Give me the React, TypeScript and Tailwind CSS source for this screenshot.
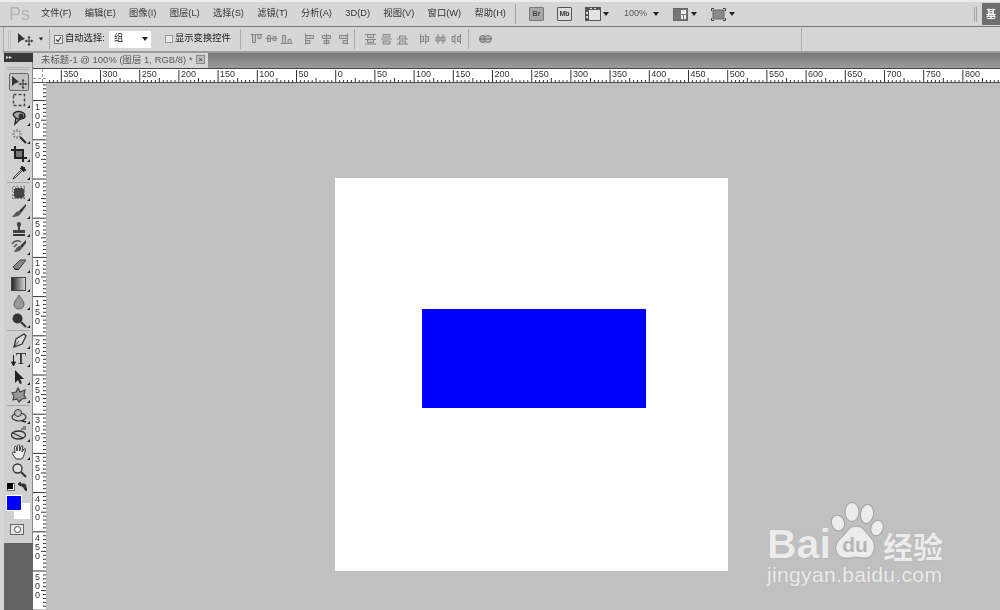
import React from "react";

const D = 39.2;
const range = (a: number, b: number) => Array.from({ length: b - a + 1 }, (_, i) => a + i);

function HRuler() {
  const ox = 335.7 - 46;
  return (
    <svg width={954} height={14} className="block">
      {range(-80, 190).map((i) => {
        const x = ox + (i * D) / 10;
        const major = i % 10 === 0;
        const h = major ? 13 : i % 5 === 0 ? 5 : 3;
        return <line key={i} x1={x} x2={x} y1={14 - h} y2={13.5} stroke="#333" strokeWidth={1} />;
      })}
      {range(-7, 16).map((i) => (
        <text key={i} x={ox + i * D + 2} y={8} fontSize={9} fill="#333" fontFamily="Liberation Sans, sans-serif">
          {Math.abs(i * 50)}
        </text>
      ))}
    </svg>
  );
}

function VRuler() {
  const oy = 179 - 83;
  return (
    <svg width={13} height={530} className="block">
      {range(-30, 130).map((i) => {
        const y = oy + (i * D) / 10;
        const major = i % 10 === 0;
        const w = major ? 13 : i % 5 === 0 ? 5 : 3;
        return <line key={i} x1={13 - w} x2={13} y1={y} y2={y} stroke="#333" strokeWidth={1} />;
      })}
      {range(-2, 10).map((i) =>
        String(Math.abs(i * 50))
          .split("")
          .map((c, k) => (
            <text key={k + "-" + i} x={2} y={oy + i * D + 9 + k * 9} fontSize={9} fill="#333" fontFamily="Liberation Sans, sans-serif">
              {c}
            </text>
          ))
      )}
    </svg>
  );
}

const Menu = ["文件(F)", "编辑(E)", "图像(I)", "图层(L)", "选择(S)", "滤镜(T)", "分析(A)", "3D(D)", "视图(V)", "窗口(W)", "帮助(H)"];

function Caret({ className = "" }: { className?: string }) {
  return <span className={"block w-0 h-0 border-l-[3px] border-r-[3px] border-t-[4px] border-l-transparent border-r-transparent border-t-[#222] " + className} />;
}

function Flyout() {
  return <span className="absolute right-[3px] bottom-[1px] w-0 h-0 border-l-[3px] border-t-[3px] border-l-transparent border-t-transparent border-r-[0px] border-b-[3px] border-b-[#222]" />;
}

function Tool({ children, fly = true, h = 18 }: { children: React.ReactNode; fly?: boolean; h?: number }) {
  return (
    <div className="relative w-[29px] flex items-center justify-center" style={{ height: h }}>
      {children}
      {fly && <Flyout />}
    </div>
  );
}

function I({ children, w = 16, h = 16 }: { children: React.ReactNode; w?: number; h?: number }) {
  return (
    <svg width={w} height={h} viewBox={`0 0 ${w} ${h}`} className="block">
      {children}
    </svg>
  );
}

const MoveGlyph = () => (
  <I w={18} h={14}>
    <path d="M2 1 L2 11 L5 8.5 L9 7 Z" fill="#333" />
    <path d="M13 5 V13 M9.5 9 H16.5" stroke="#444" strokeWidth={1.2} />
    <path d="M13 3.5 L11.5 6 H14.5 Z M13 14.5 L11.5 12 H14.5 Z M8.5 9 L11 7.5 V10.5 Z M17.5 9 L15 7.5 V10.5 Z" fill="#444" />
  </I>
);

function AlignIcon({ d, w = 13 }: { d: string; w?: number }) {
  return (
    <svg width={w} height={12} viewBox={`0 0 ${w} 12`} className="block opacity-70 shrink-0">
      <path d={d} stroke="#666" fill="#bdbdbd" strokeWidth={1} />
    </svg>
  );
}

const alignA = "M0.5 1.5 H12.5 M2.5 1.5 V9.5 H5.5 V1.5 M8 1.5 V5.5 H11 V1.5";
const alignB = "M0.5 5.5 H12.5 M2.5 2.5 V8.5 H5.5 V2.5 Z M8 3.5 V7.5 H11 V3.5 Z";
const alignC = "M0.5 10.5 H12.5 M2.5 10.5 V2.5 H5.5 V10.5 M8 10.5 V6.5 H11 V10.5";
const alignD = "M1.5 0.5 V11.5 M1.5 2.5 H9.5 V5.5 H1.5 M1.5 7.5 H6 V10.5 H1.5";
const alignE = "M5.5 0.5 V11.5 M1.5 2.5 H9.5 V5.5 H1.5 Z M3 7.5 H8 V10.5 H3 Z";
const alignF = "M9.5 0.5 V11.5 M9.5 2.5 H1.5 V5.5 H9.5 M9.5 7.5 H5 V10.5 H9.5";

const distA = "M1 1.5 H12 M1 6.5 H12 M3.5 1.5 V4.5 H9.5 V1.5 M3.5 6.5 V9.5 H9.5 V6.5 M1 11 H12";
const distB = "M3 1.5 H10 V4 H3 Z M1 6 H12 M3 8 H10 V11 H3 Z";
const distC = "M1 11 H12 M3.5 11 V8 H9.5 V11 M3.5 6 V3 H9.5 V6 M1 6 H12";
const distD = "M1.5 1 V11 M6.5 1 V11 M1.5 3.5 H4.5 V8.5 H1.5 M6.5 3.5 H9.5 V8.5 H6.5";
const distE = "M3 1 V11 M8 1 V11 M1 4 H5 V8 H1 Z M6 4 H10 V8 H6 Z";
const distF = "M4 1 V11 M9.5 1 V11 M4 3.5 H1 V8.5 H4 M9.5 3.5 H6.5 V8.5 H9.5";

export default function App() {
  return (
    <div
      className="relative w-[1000px] h-[610px] overflow-hidden flex flex-col bg-[#d6d6d6] text-[#333] text-[9.3px]"
      style={{ fontFamily: '"Liberation Sans","Noto Sans CJK SC",sans-serif' }}
    >
      {/* menu bar */}
      <div className="h-[27px] shrink-0 flex items-center bg-[#d6d6d6] border-t-2 border-t-[#ececec] border-b border-b-[#767676] relative blur-[0.3px]">
        <span className="ml-[9px] w-[32px] text-[18px] text-[#b4b4b4] leading-none" style={{ fontFamily: '"Liberation Sans",sans-serif' }}>
          Ps
        </span>
        <div className="w-[465px] flex justify-between whitespace-nowrap">
          {Menu.map((m) => (
            <span key={m}>{m}</span>
          ))}
        </div>
        <span className="ml-[9px] w-px h-[20px] bg-[#a0a0a0]" />
        <div className="ml-[13px] w-[15px] h-[14px] border border-[#777] bg-[#a8a8a8] rounded-[1px] text-[7px] font-bold flex items-center justify-center text-[#444]">Br</div>
        <div className="ml-[13px] w-[15px] h-[14px] border border-[#555] bg-[#dcdcdc] rounded-[1px] text-[7px] font-bold flex items-center justify-center text-[#333]">Mb</div>
        <div className="ml-[13px]">
          <svg width={16} height={14} viewBox="0 0 16 14" className="block">
            <rect x={0.5} y={0.5} width={15} height={13} fill="#e2e2e2" stroke="#555" />
            <rect x={0} y={0} width={16} height={3} fill="#555" />
            <rect x={0} y={0} width={4} height={14} fill="#555" />
            <rect x={1} y={5} width={2} height={2} fill="#ddd" />
            <rect x={1} y={9} width={2} height={2} fill="#ddd" />
            <rect x={5} y={1} width={2} height={1} fill="#ddd" />
            <rect x={9} y={1} width={2} height={1} fill="#ddd" />
          </svg>
        </div>
        <Caret className="ml-[2px]" />
        <span className="ml-[15px] w-[24px] text-[#555] text-[9px]">100%</span>
        <Caret className="ml-[5px]" />
        <div className="ml-[14px]">
          <svg width={15} height={13} viewBox="0 0 15 13" className="block">
            <rect x={0.5} y={0.5} width={14} height={12} fill="#777" stroke="#666" />
            <rect x={8} y={2} width={5} height={4} fill="#eee" />
            <rect x={8} y={7} width={2} height={4} fill="#eee" />
            <rect x={11} y={7} width={2} height={4} fill="#eee" />
          </svg>
        </div>
        <Caret className="ml-[3px]" />
        <div className="ml-[14px]">
          <svg width={15} height={13} viewBox="0 0 15 13" className="block">
            <rect x={2} y={2} width={11} height={9} fill="#8a8a8a" stroke="#666" />
            <path d="M0.5 3 V0.5 H3 M12 0.5 H14.5 V3 M14.5 10 V12.5 H12 M3 12.5 H0.5 V10" stroke="#444" fill="none" />
          </svg>
        </div>
        <Caret className="ml-[3px]" />
        <div className="ml-auto flex items-center">
          <span className="w-[3px] h-[15px] border-x border-[#a8a8a8] mr-[5px]" />
          <div className="w-[18px] h-[22px] bg-[#6e6e6e] text-white text-[10px] pl-[4px] flex items-center font-bold rounded-l-[1px]">基</div>
        </div>
      </div>

      {/* options bar */}
      <div className="h-[26px] shrink-0 flex items-center bg-[#d6d6d6] border-b-2 border-b-[#9c9c9c] border-l border-l-[#aaa] ml-[3px] blur-[0.3px]">
        <span className="ml-[4px] w-[3px] h-[19px] border-x border-[#c2c2c2]" />
        <div className="ml-[5px]">
          <MoveGlyph />
        </div>
        <Caret className="ml-[4px] scale-75" />
        <span className="ml-[5px] w-px h-[20px] bg-[#aaa]" />
        <span className="ml-[4px] w-[9px] h-[9px] border border-[#777] bg-[#eef2f8] flex items-center justify-center shrink-0">
          <svg width={7} height={7} viewBox="0 0 7 7" className="block">
            <path d="M1 3.5 L3 5.5 L6 1" stroke="#345" fill="none" strokeWidth={1.2} />
          </svg>
        </span>
        <span className="ml-[2px] w-[44px] text-[#222] whitespace-nowrap">自动选择:</span>
        <div className="w-[42px] h-[17px] bg-white flex items-center pl-[5px] pr-[3px] justify-between text-[#222]">
          <span>组</span>
          <Caret />
        </div>
        <span className="ml-[14px] w-[8px] h-[8px] border border-[#999] bg-[#e8e8e8] shrink-0" />
        <span className="ml-[2px] w-[56px] text-[#222] whitespace-nowrap">显示变换控件</span>
        <span className="ml-[9px] w-px h-[20px] bg-[#aaa]" />
        <div className="ml-[9px] flex items-center gap-[2px]">
          {[alignA, alignB, alignC].map((d, i) => (
            <AlignIcon key={i} d={d} />
          ))}
        </div>
        <div className="ml-[11px] flex items-center gap-[6px]">
          {[alignD, alignE, alignF].map((d, i) => (
            <AlignIcon key={i} d={d} w={11} />
          ))}
        </div>
        <span className="ml-[5px] w-px h-[20px] bg-[#aaa]" />
        <div className="ml-[9px] flex items-center gap-[3px]">
          {[distA, distB, distC].map((d, i) => (
            <AlignIcon key={i} d={d} />
          ))}
        </div>
        <div className="ml-[10px] flex items-center gap-[5px]">
          {[distD, distE, distF].map((d, i) => (
            <AlignIcon key={i} d={d} w={11} />
          ))}
        </div>
        <span className="ml-[6px] w-px h-[20px] bg-[#aaa]" />
        <div className="ml-[10px]">
          <svg width={13} height={12} viewBox="0 0 13 12" className="block">
            <circle cx={4} cy={6} r={3.5} fill="#aaa" stroke="#777" />
            <circle cx={9} cy={6} r={3.5} fill="#bbb" stroke="#777" />
            <path d="M1 6 H12" stroke="#666" />
          </svg>
        </div>
        <span className="ml-[309px] w-px h-[22px] bg-[#aaa]" />
      </div>

      {/* workspace */}
      <div className="flex-1 flex min-h-0">
        {/* tools */}
        <div className="w-[33px] shrink-0 pl-[4px] flex flex-col blur-[0.3px]">
          <div className="h-[9px] bg-[#383838] text-[#ddd] text-[6px] leading-[9px] pl-[2px]">▸▸</div>
          <div className="flex-1 flex flex-col bg-[#d0d0d0] border-r border-[#8a8a8a]">
            <div className="h-[11px] flex items-center">
              <span className="mx-auto mt-[2px] w-[22px] h-[3px] border-y border-[#b0b0b0]" />
            </div>
            <div className="relative w-[29px] h-[18px] flex items-center justify-center">
              <div className="w-[20px] h-[18px] border border-[#666] rounded-[2px] bg-[#c2c2c2] flex items-center justify-center">
                <MoveGlyph />
              </div>
            </div>
            <Tool>
              <I>
                <rect x={2.5} y={2.5} width={11} height={11} fill="none" stroke="#444" strokeWidth={1.4} strokeDasharray="3 2" />
              </I>
            </Tool>
            <Tool>
              <I>
                <path d="M3 3 C7 0 14 2 14 6 C14 9 8 10 5 8 C2 6 2 4 3 3 Z" fill="#aaa" stroke="#222" strokeWidth={1.4} />
                <path d="M5 8 L4 14 L9 9" stroke="#222" strokeWidth={1.4} fill="none" />
                <circle cx={10} cy={6} r={2.5} fill="#333" />
              </I>
            </Tool>
            <Tool>
              <I>
                <path d="M9 9 L15 15" stroke="#222" strokeWidth={2} />
                <path d="M6 1 V4 M6 8 V11 M1 6 H4 M8 6 H11 M2.5 2.5 L4 4 M8 8 L9.5 9.5 M9.5 2.5 L8 4 M2.5 9.5 L4 8" stroke="#777" strokeWidth={1.2} />
              </I>
            </Tool>
            <Tool>
              <I>
                <path d="M4 0 V12 H16 M0 4 H12 V16" fill="none" stroke="#222" strokeWidth={2} />
                <rect x={5} y={5} width={6} height={6} fill="#777" />
              </I>
            </Tool>
            <Tool>
              <I>
                <path d="M13 3 L9 7 L3 13 L2 15 L4 14 L10 8 L14 4 Z" fill="#ddd" stroke="#333" />
                <path d="M9 4 L13 8 M11 2 L15 6 L13 7 L10 4 Z" fill="#222" stroke="#222" />
              </I>
            </Tool>
            <div className="mx-[3px] my-[1px] h-px bg-[#a8a8a8]" />
            <Tool>
              <I>
                <rect x={3} y={3} width={10} height={10} rx={2.5} fill="#444" />
                <path d="M3 1 V15 M6 1 V15 M10 1 V15 M13 1 V15 M1 3 H15 M1 6 H15 M1 10 H15 M1 13 H15" stroke="#444" strokeDasharray="1 2" />
              </I>
            </Tool>
            <Tool>
              <I>
                <path d="M15 1 L8 8 L10 10 L15 3 Z" fill="#333" />
                <path d="M8 8 C5 8 4 11 1 14 C5 14 9 13 10 10 Z" fill="#555" />
              </I>
            </Tool>
            <Tool>
              <I>
                <path d="M8 1 C5.5 1 5.5 4 7 6 V9 H2 V12 H14 V9 H9 V6 C10.5 4 10.5 1 8 1 Z" fill="#444" />
                <rect x={2} y={13} width={12} height={2} fill="#333" />
              </I>
            </Tool>
            <Tool>
              <I>
                <path d="M15 1 L9 7 L11 9 L15 4 Z" fill="#333" />
                <path d="M9 7 C6 7 5 10 3 13 C6 13 10 12 11 9 Z" fill="#555" />
                <path d="M1 5 C4 1 8 1 10 3 M3 8 L6 5" stroke="#555" fill="none" strokeWidth={1.5} />
              </I>
            </Tool>
            <Tool>
              <I>
                <path d="M2 10 L9 3 H15 L8 12 H4 Z" fill="#888" stroke="#444" />
                <path d="M2 10 L4 13 H8 L8 12 H4 Z" fill="#222" />
              </I>
            </Tool>
            <Tool h={19}>
              <svg width={15} height={14} className="block">
                <defs>
                  <linearGradient id="gr" x1="0" x2="1" y1="0" y2="0">
                    <stop offset="0" stopColor="#222" />
                    <stop offset="1" stopColor="#ddd" />
                  </linearGradient>
                </defs>
                <rect x={0.5} y={0.5} width={14} height={13} fill="url(#gr)" stroke="#444" />
              </svg>
            </Tool>
            <Tool>
              <I>
                <path d="M8 1 C6 5 3 7 3 10.5 C3 13 5 15 8 15 C11 15 13 13 13 10.5 C13 7 10 5 8 1 Z" fill="#999" stroke="#666" />
              </I>
            </Tool>
            <Tool>
              <I>
                <circle cx={6.5} cy={6.5} r={5} fill="#333" />
                <path d="M10 10 L15 15" stroke="#333" strokeWidth={2} />
              </I>
            </Tool>
            <div className="mx-[3px] my-[1px] h-px bg-[#a8a8a8]" />
            <Tool>
              <I>
                <path d="M13 1 L15 3 L11 11 L3 14 L5 6 Z" fill="#ddd" stroke="#333" strokeWidth={1.3} />
                <path d="M3 14 L8 8" stroke="#333" />
              </I>
            </Tool>
            <Tool>
              <div className="flex items-end">
                <svg width={5} height={13} viewBox="0 0 5 13" className="block">
                  <path d="M2.5 1 V10 M0.5 8 L2.5 12 L4.5 8 Z" stroke="#222" fill="#222" />
                </svg>
                <span className="text-[17px] leading-[16px] text-[#222]" style={{ fontFamily: '"Liberation Serif",serif' }}>
                  T
                </span>
              </div>
            </Tool>
            <Tool>
              <I>
                <path d="M4 1 V14 L7 11 L9 15 L11 14 L9 10 L13 10 Z" fill="#222" />
              </I>
            </Tool>
            <Tool>
              <I>
                <path d="M7 1 L9 5 L14 3 L13 8 L15 11 L11 12 L8 15 L6 12 L2 13 L3 9 L1 6 L5 5 Z" fill="#999" stroke="#444" strokeWidth={1.2} />
              </I>
            </Tool>
            <div className="mx-[3px] my-[1px] h-px bg-[#a8a8a8]" />
            <Tool>
              <I>
                <ellipse cx={8} cy={9} rx={7} ry={4} fill="none" stroke="#333" strokeWidth={1.2} />
                <circle cx={7} cy={5} r={3.5} fill="#bbb" stroke="#333" />
                <path d="M11 13 L15 14" stroke="#222" strokeWidth={1.4} />
              </I>
            </Tool>
            <Tool>
              <I>
                <ellipse cx={7.5} cy={9} rx={7} ry={4} fill="none" stroke="#333" strokeWidth={1.3} />
                <path d="M2 7 L12 12 M10 3 H15 M12 1 H15" stroke="#333" strokeWidth={1.2} />
              </I>
            </Tool>
            <Tool>
              <I>
                <path d="M5 15 C3 12 1 10 1.5 8.5 C2 7.5 3.5 8 4 9 L3.5 3.5 C3.5 2 5.5 2 5.5 3.5 L6 7 L6.5 1.5 C6.5 0.5 8.5 0.5 8.5 1.5 L8.7 7 L10 2.5 C10.5 1 12 1.5 11.8 3 L11 8 L13 5 C14 4 15 5 14.5 6 C13.5 9 13 12 11 15 Z" fill="#eee" stroke="#333" />
              </I>
            </Tool>
            <Tool fly={false}>
              <I>
                <circle cx={6.5} cy={6.5} r={4.5} fill="#ddd" stroke="#333" strokeWidth={1.3} />
                <path d="M10 10 L15 15" stroke="#333" strokeWidth={2} />
              </I>
            </Tool>
            {/* colours */}
            <div className="h-[14px] flex items-center justify-between pl-[3px] pr-[5px] mt-[1px]">
              <span className="relative block w-[8px] h-[8px] bg-white border border-[#666]">
                <span className="absolute -left-[1px] -top-[1px] w-[6px] h-[6px] bg-black" />
              </span>
              <svg width={9} height={10} viewBox="0 0 9 10" className="block">
                <path d="M1 2 H6 C7.5 2 8 3 8 5 V8 M0 2 L2.5 0 V4 Z M8 9 L6 6.5 H10 Z" stroke="#333" fill="#333" />
              </svg>
            </div>
            <div className="relative h-[23px] mt-[1px]">
              <div className="absolute left-[10px] top-[8px] w-[16px] h-[16px] bg-white" />
              <div className="absolute left-[3px] top-[1px] w-[14px] h-[14px] bg-[#0000ff] outline outline-1 outline-white" />
            </div>
            <div className="mt-[6px] flex justify-center pr-[2px]">
              <div className="w-[14px] h-[11px] border border-[#666] bg-[#e6e6e6] flex items-center justify-center">
                <span className="w-[7px] h-[7px] rounded-full border border-[#444] bg-white" />
              </div>
            </div>
            <div className="mt-[8px] flex-1 bg-[#636363] -mr-px" />
          </div>
        </div>

        {/* document */}
        <div className="flex-1 min-w-0 flex flex-col">
          <div className="h-[15px] shrink-0 flex bg-gradient-to-b from-[#787878] to-[#9c9c9c]">
            <div className="w-[175px] bg-[#d6d6d6] flex items-center pl-[8px] text-[#555] whitespace-nowrap relative blur-[0.3px]">
              <span className="tracking-[0.05px] text-[9.4px]">未标题-1 @ 100% (图层 1, RGB/8) *</span>
              <span className="absolute left-[163px] top-[2px] w-[9px] h-[9px] bg-[#c0c0c0] border border-[#888] text-[8px] leading-[7px] text-center text-[#333]">×</span>
            </div>
          </div>
          <div className="h-[15px] shrink-0 flex bg-white border-t border-[#444] border-b border-b-[#555] blur-[0.3px]">
            <div className="w-[13px] shrink-0 relative">
              <span className="absolute left-[9px] top-0 h-[13px] border-l border-dashed border-[#999]" />
              <span className="absolute left-0 top-[9px] w-[13px] border-t border-dashed border-[#999]" />
            </div>
            <HRuler />
          </div>
          <div className="flex-1 min-h-0 flex">
            <div className="w-[13px] shrink-0 bg-white overflow-hidden blur-[0.3px]">
              <VRuler />
            </div>
            <div className="flex-1 bg-[#c0c0c0] pl-[289px] pt-[95px]">
              <div className="w-[393px] h-[393px] bg-white pl-[87px] pt-[131px]">
                <div className="w-[224px] h-[99px] bg-[#0000ff]" />
              </div>
            </div>
          </div>
        </div>
      </div>

      {/* watermark */}
      <div className="absolute left-[767px] top-[502px] w-[190px] h-[90px] text-[#ececec]">
        <span className="absolute left-0 top-[22px] text-[41px] font-bold leading-[41px]" style={{ textShadow: "0 0 1px #999" }}>
          Bai
        </span>
        <svg width={56} height={60} viewBox="0 0 56 60" className="absolute left-[61px] top-0">
          <g fill="#ececec" stroke="#a0a0a0" strokeWidth={1}>
            <ellipse cx={10} cy={21} rx={6.5} ry={8} transform="rotate(-20 10 21)" />
            <ellipse cx={24} cy={10} rx={7} ry={9.5} />
            <ellipse cx={39} cy={12} rx={6.5} ry={9.5} transform="rotate(8 39 12)" />
            <ellipse cx={49} cy={26} rx={6} ry={8} transform="rotate(18 49 26)" />
            <path d="M28 24 C35 24 38 31 43 36 C49 42 47 55 38 56 C33 56.5 31 55 28 55 C25 55 22 57 16 56 C7 54 5 44 12 37 C18 32 21 24 28 24 Z" />
          </g>
          <text x={27} y={50} textAnchor="middle" fontSize={21} fontWeight={700} fill="#b5b5b5" fontFamily="Liberation Sans, sans-serif">du</text>
        </svg>
        <span className="absolute left-[116px] top-[27px] text-[30px] font-bold leading-[32px] whitespace-nowrap" style={{ fontFamily: '"Noto Sans CJK SC",sans-serif', textShadow: "0 0 1px #999" }}>
          经验
        </span>
        <span className="absolute left-0 top-[61px] text-[21px] leading-[24px] whitespace-nowrap tracking-[0.35px]" style={{ fontFamily: '"Liberation Sans",sans-serif', textShadow: "0 0 1px #aaa" }}>
          jingyan.baidu.com
        </span>
      </div>
    </div>
  );
}
